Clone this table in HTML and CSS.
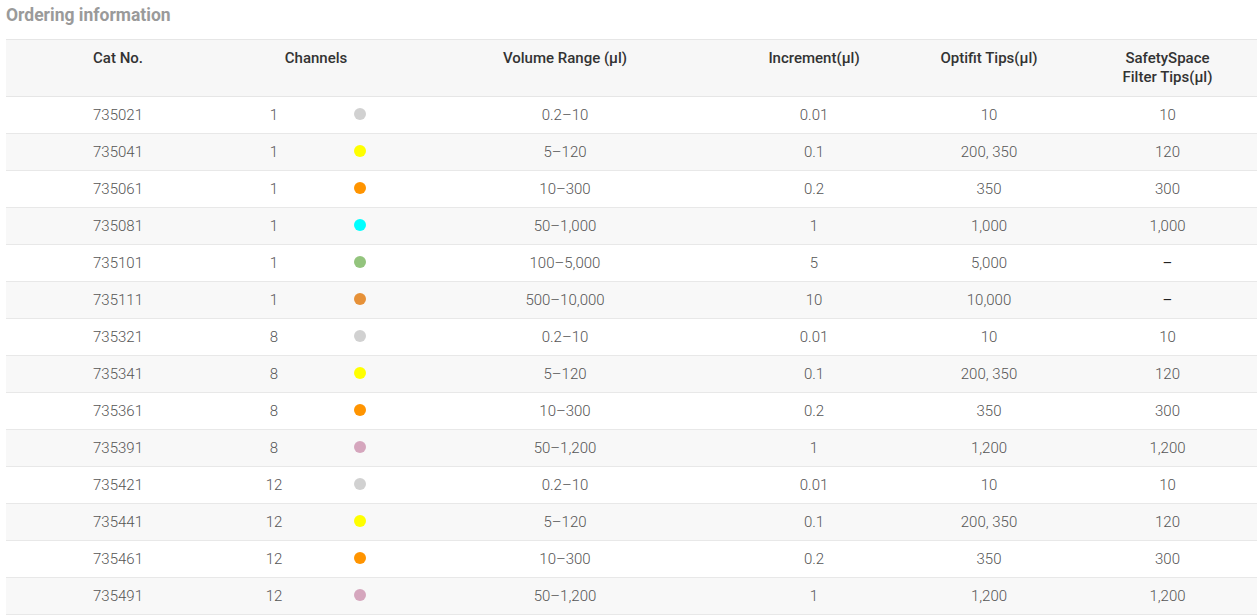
FILE: index.html
```html
<!DOCTYPE html>
<html>
<head>
<meta charset="utf-8">
<link rel="stylesheet" href="styles.css">
</head>
<body>
<div class="page">
  <h2 class="title">Ordering information</h2>
  <table class="order">
    <colgroup>
      <col class="c-cat"><col class="c-ch"><col class="c-dot"><col class="c-vol"><col class="c-inc"><col class="c-opt"><col class="c-safe">
    </colgroup>
    <thead>
      <tr>
        <th>Cat No.</th>
        <th colspan="2">Channels</th>
        <th>Volume Range (µl)</th>
        <th>Increment(µl)</th>
        <th>Optifit Tips(µl)</th>
        <th>SafetySpace<br>Filter Tips(µl)</th>
      </tr>
    </thead>
    <tbody>
      <tr><td>735021</td><td>1</td><td><span class="dot grey"></span></td><td>0.2–10</td><td>0.01</td><td>10</td><td>10</td></tr>
      <tr><td>735041</td><td>1</td><td><span class="dot yellow"></span></td><td>5–120</td><td>0.1</td><td>200, 350</td><td>120</td></tr>
      <tr><td>735061</td><td>1</td><td><span class="dot orange"></span></td><td>10–300</td><td>0.2</td><td>350</td><td>300</td></tr>
      <tr><td>735081</td><td>1</td><td><span class="dot cyan"></span></td><td>50–1,000</td><td>1</td><td>1,000</td><td>1,000</td></tr>
      <tr><td>735101</td><td>1</td><td><span class="dot green"></span></td><td>100–5,000</td><td>5</td><td>5,000</td><td class="dash">–</td></tr>
      <tr><td>735111</td><td>1</td><td><span class="dot dark-orange"></span></td><td>500–10,000</td><td>10</td><td>10,000</td><td class="dash">–</td></tr>
      <tr><td>735321</td><td>8</td><td><span class="dot grey"></span></td><td>0.2–10</td><td>0.01</td><td>10</td><td>10</td></tr>
      <tr><td>735341</td><td>8</td><td><span class="dot yellow"></span></td><td>5–120</td><td>0.1</td><td>200, 350</td><td>120</td></tr>
      <tr><td>735361</td><td>8</td><td><span class="dot orange"></span></td><td>10–300</td><td>0.2</td><td>350</td><td>300</td></tr>
      <tr><td>735391</td><td>8</td><td><span class="dot pink"></span></td><td>50–1,200</td><td>1</td><td>1,200</td><td>1,200</td></tr>
      <tr><td>735421</td><td>12</td><td><span class="dot grey"></span></td><td>0.2–10</td><td>0.01</td><td>10</td><td>10</td></tr>
      <tr><td>735441</td><td>12</td><td><span class="dot yellow"></span></td><td>5–120</td><td>0.1</td><td>200, 350</td><td>120</td></tr>
      <tr><td>735461</td><td>12</td><td><span class="dot orange"></span></td><td>10–300</td><td>0.2</td><td>350</td><td>300</td></tr>
      <tr><td>735491</td><td>12</td><td><span class="dot pink"></span></td><td>50–1,200</td><td>1</td><td>1,200</td><td>1,200</td></tr>
    </tbody>
  </table>
</div>
</body>
</html>
```

FILE: styles.css
```css
html, body {
  margin: 0;
  padding: 0;
  background: #fff;
}
.page {
  padding: 5px 0 0 6px;
  font-family: Roboto, "Noto Sans", "Liberation Sans", sans-serif;
}
.title {
  margin: 0 0 14px 0;
  font-size: 17.5px;
  line-height: 20px;
  font-weight: 700;
  color: #9a9a9a;
}
.order {
  width: 1251px;
  table-layout: fixed;
  border-collapse: collapse;
  font-size: 15px;
}
.c-cat { width: 224px; }
.c-ch { width: 88px; }
.c-dot { width: 84px; }
.c-vol { width: 326px; }
.c-inc { width: 172px; }
.c-opt { width: 178px; }
.c-safe { width: 179px; }
.order th {
  background: #f7f7f7;
  border-top: 1px solid #e6e6e6;
  border-bottom: 1px solid #e6e6e6;
  height: 57px;
  padding: 9px 0 0 0;
  box-sizing: border-box;
  vertical-align: top;
  font-weight: 500;
  color: #333;
  line-height: 19px;
  text-align: center;
}
.order td {
  height: 36px;
  padding: 0;
  text-align: center;
  vertical-align: middle;
  border-bottom: 1px solid #e8e8e8;
  color: #555;
  font-weight: 300;
  line-height: 19px;
}
.order tbody tr:nth-child(even) td {
  background: #f8f8f8;
}
.order td.dash {
  color: #222;
  font-weight: 400;
}
.dot {
  display: inline-block;
  width: 12px;
  height: 12px;
  border-radius: 50%;
  vertical-align: baseline;
}
.dot.grey { background: #d1d1d1; }
.dot.yellow { background: #ffff00; }
.dot.orange { background: #ff9400; }
.dot.cyan { background: #00ffff; }
.dot.green { background: #93c47d; }
.dot.dark-orange { background: #e69138; }
.dot.pink { background: #d5a6bd; }
```
